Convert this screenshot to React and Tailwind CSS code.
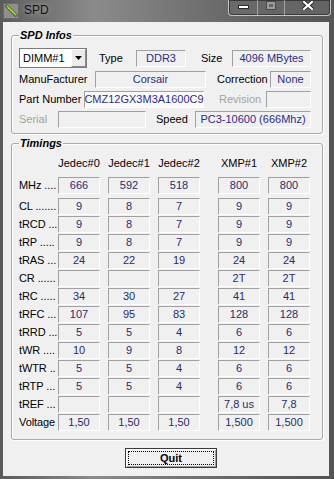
import React from "react";

const font = { fontFamily: '"Liberation Sans", Arial, sans-serif' };

const Box = ({ w, children, white, align = "center", color = "text-[#2c2c8c]" }) => (
  <div
    className={`${w} h-[17px] flex items-center ${align === "center" ? "justify-center" : "justify-start pl-[1px]"} border border-t-[#a0a0a0] border-l-[#a0a0a0] border-b-white border-r-white ${white ? "bg-[#fbfbfd]" : "bg-[#f0f0f0]"} ${color} text-[11px] leading-none whitespace-nowrap overflow-visible`}
  >
    {children}
  </div>
);

const Label = ({ w, children, gray }) => (
  <span className={`${w} shrink-0 text-[11px] leading-none whitespace-nowrap ${gray ? "text-[#a3a3a3]" : "text-black"}`}>
    {children}
  </span>
);

const timings = [
  ["CL .......", "9", "8", "7", "9", "9"],
  ["tRCD ...", "9", "8", "7", "9", "9"],
  ["tRP .....", "9", "8", "7", "9", "9"],
  ["tRAS ...", "24", "22", "19", "24", "24"],
  ["CR ......", "", "", "", "2T", "2T"],
  ["tRC .....", "34", "30", "27", "41", "41"],
  ["tRFC ...", "107", "95", "83", "128", "128"],
  ["tRRD ...", "5", "5", "4", "6", "6"],
  ["tWR ....", "10", "9", "8", "12", "12"],
  ["tWTR ..", "5", "5", "4", "6", "6"],
  ["tRTP ...", "5", "5", "4", "6", "6"],
  ["tREF ...", "", "", "", "7,8 us", "7,8"],
  ["Voltage", "1,50", "1,50", "1,50", "1,500", "1,500"],
];

const colMargins = ["", "ml-[8px]", "ml-[8px]", "ml-[18px]", "ml-[8px]"];

const TimingRow = ({ row }) => (
  <div className="flex items-center h-[17px]">
    <span className="w-[39px] shrink-0 whitespace-nowrap text-[11px] leading-none tracking-[-0.1px] text-black">{row[0]}</span>
    {row.slice(1).map((v, i) => (
      <div key={i} className={colMargins[i]}>
        <Box w="w-[42px]" color="text-[#2a2a72]">{v}</Box>
      </div>
    ))}
  </div>
);

const AppIcon = () => (
  <svg width="16" height="16" viewBox="0 0 16 16">
    <rect x="0.5" y="0.5" width="15" height="15" fill="#8f8f8f" stroke="#6a6a6a" />
    <path d="M2 3 L4 1.5 L14.5 12 L12.5 14 Z" fill="#5c9e2a" stroke="#2f5a16" strokeWidth="0.8" />
    <path d="M3.5 3 L4.3 2.4 L13.5 11.6 L12.8 12.3 Z" fill="#b7e06a" />
    <path d="M5 6 L6 5 M7 8 L8 7 M9 10 L10 9" stroke="#d8e84a" strokeWidth="0.8" />
  </svg>
);

export default function App() {
  return (
    <div
      style={font}
      className="w-[334px] h-[479px] flex flex-col overflow-hidden bg-[linear-gradient(to_right,#5b5b5b,#8b8b8b_28%,#747474_55%,#5e5e5e_80%,#555555)]"
    >
      {/* title bar */}
      <div className="h-[22px] flex items-start relative">
        <div className="ml-[3px] mt-[3px]">
          <AppIcon />
        </div>
        <span className="ml-[5px] mt-[3px] text-[12px] leading-[14px] text-[#111] [text-shadow:0_0_6px_#bdbdbd]">SPD</span>
        <div className="absolute left-[228px] top-0 w-[103px] h-[16px] flex rounded-b-[4px] border border-t-0 border-[#c4c4c4] shadow-[inset_0_0_0_1px_#3a3a3a] bg-[#6c6c6c]/60">
          <div className="w-[29px] h-full flex items-start justify-center pt-[5px] border-r border-[#bdbdbd]/70">
            <div className="w-[11px] h-[4px] bg-white border border-[#2a2a2a]" />
          </div>
          <div className="w-[27px] h-full flex items-start justify-center pt-[2px] border-r border-[#bdbdbd]/70">
            <div className="w-[8px] h-[7px] border-2 border-[#9c9c9c] shadow-[0_0_0_1px_#4a4a4a]" />
          </div>
          <div className="flex-1 flex items-start justify-center pt-[1px]">
            <svg width="12" height="9" viewBox="0 0 12 9">
              <path d="M2 1 L10 8 M10 1 L2 8" stroke="#2a2a2a" strokeWidth="4" strokeLinecap="square" />
              <path d="M2 1 L10 8 M10 1 L2 8" stroke="#ffffff" strokeWidth="2.2" strokeLinecap="square" />
            </svg>
          </div>
        </div>
      </div>

      {/* client area */}
      <div className="flex-1 ml-[3px] mr-[5px] mb-[3px] bg-[#f0f0f0] flex flex-col">
        <fieldset className="ml-[8px] mt-[6px] w-[312px] border border-[#a9a9a9] rounded-[3px] shadow-[inset_1px_1px_0_#fff,1px_1px_0_#fff] pl-[7px] pb-[5px]">
          <legend className="px-[1px] text-[11px] leading-[14px] font-bold italic text-black">SPD Infos</legend>
          <div className="mt-[6px] flex flex-col gap-[2px]">
            <div className="flex items-center h-[20px]">
              <div className="w-[68px] h-[20px] flex border border-[#7a7a7a] bg-white">
                <span className="flex-1 pl-[3px] flex items-center text-[11px] leading-none text-black">DIMM#1</span>
                <div className="w-[15px] h-full flex items-center justify-center bg-[#ececec] border border-t-white border-l-white border-b-[#8a8a8a] border-r-[#8a8a8a]">
                  <svg width="7" height="4" viewBox="0 0 7 4">
                    <path d="M0 0 H7 L3.5 4 Z" fill="#000" />
                  </svg>
                </div>
              </div>
              <Label w="w-[49px] pl-[12px]">Type</Label>
              <Box w="w-[50px]">DDR3</Box>
              <Label w="w-[46px] pl-[15px]">Size</Label>
              <Box w="w-[79px]">4096 MBytes</Box>
            </div>
            <div className="flex items-center h-[18px]">
              <Label w="w-[76px]">ManuFacturer</Label>
              <Box w="w-[111px]">Corsair</Box>
              <Label w="w-[64px] pl-[11px]">Correction</Label>
              <Box w="w-[41px]">None</Box>
            </div>
            <div className="flex items-center h-[18px]">
              <Label w="w-[65px]">Part Number</Label>
              <Box w="w-[120px]" white>CMZ12GX3M3A1600C9</Box>
              <Label w="w-[62px] pl-[15px]" gray>Revision</Label>
              <Box w="w-[45px]" />
            </div>
            <div className="flex items-center h-[18px]">
              <Label w="w-[39px]" gray>Serial</Label>
              <Box w="w-[88px]" />
              <Label w="w-[49px] pl-[10px]">Speed</Label>
              <Box w="w-[116px]">PC3-10600 (666Mhz)</Box>
            </div>
          </div>
        </fieldset>

        <fieldset className="ml-[8px] mt-[2px] w-[312px] border border-[#a9a9a9] rounded-[3px] shadow-[inset_1px_1px_0_#fff,1px_1px_0_#fff] pl-[7px] pb-[8px]">
          <legend className="px-[1px] text-[11px] leading-[14px] font-bold italic text-black">Timings</legend>
          <div className="mt-[6px] h-[14px] flex items-center text-[11px] leading-none text-black">
            <span className="w-[39px] shrink-0" />
            {["Jedec#0", "Jedec#1", "Jedec#2", "XMP#1", "XMP#2"].map((h, i) => (
              <span key={h} className={`${colMargins[i]} w-[42px] flex justify-center whitespace-nowrap`}>
                {h}
              </span>
            ))}
          </div>
          <div className="mt-[7px]">
            <TimingRow row={["MHz ....", "666", "592", "518", "800", "800"]} />
          </div>
          <div className="mt-[4px] flex flex-col gap-[1px]">
            {timings.map((r) => (
              <TimingRow key={r[0]} row={r} />
            ))}
          </div>
        </fieldset>

        <div className="mt-[8px] ml-[122px]">
          <button className="w-[92px] h-[20px] p-[2px] bg-[#f0f0f0] border border-[#3c3c3c] shadow-[inset_1px_1px_0_#fff,inset_-1px_-1px_0_#a0a0a0] flex">
            <span className="flex-1 flex items-center justify-center border border-dotted border-black text-[11px] leading-none font-bold text-black">
              Quit
            </span>
          </button>
        </div>
      </div>
    </div>
  );
}
